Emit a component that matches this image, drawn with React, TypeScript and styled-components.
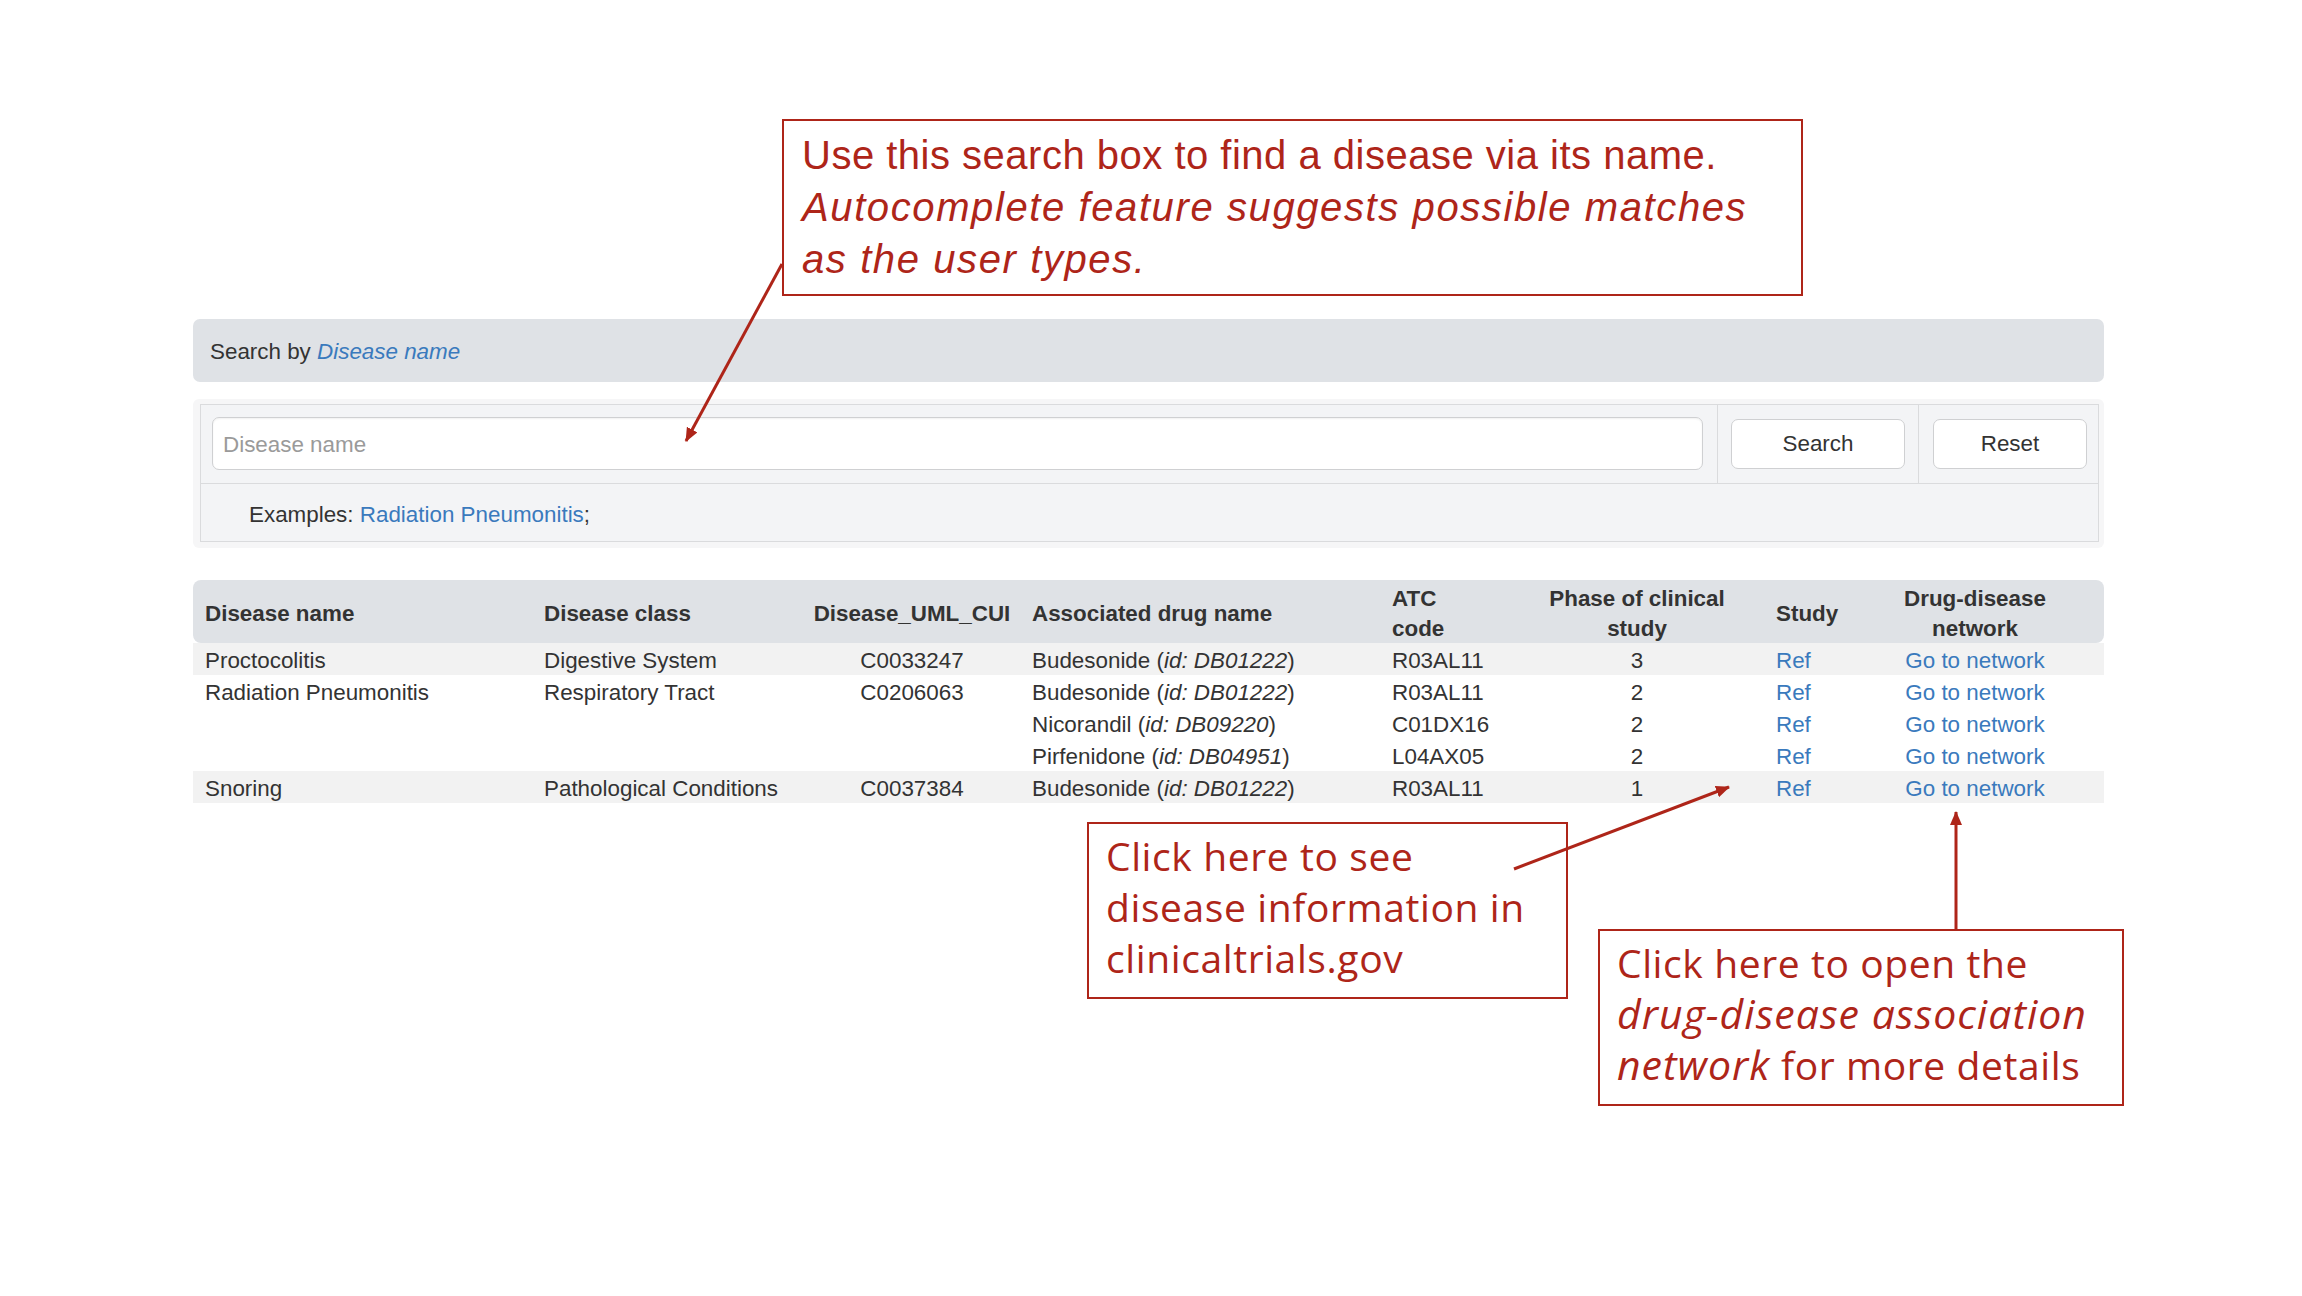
import React from "react";
import styled, { createGlobalStyle } from "styled-components";

const GlobalStyle = createGlobalStyle`
  html, body { margin: 0; padding: 0; background: #ffffff; }
  * { box-sizing: border-box; }
`;

const Page = styled.div`
  position: relative;
  width: 2302px;
  height: 1296px;
  background: #ffffff;
  font-family: "Liberation Sans", Arial, Helvetica, sans-serif;
  font-size: 22.4px;
  line-height: 32px;
  color: #333333;
  overflow: hidden;
`;

const Content = styled.main`
  display: flex;
  flex-direction: column;
  padding: 319px 198px 0 193px;
`;

const PanelHeading = styled.div`
  display: flex;
  align-items: center;
  height: 63px;
  padding: 2px 17px 0;
  background: #dfe2e6;
  border-radius: 7px;
`;

const Link = styled.a<{ $italic?: boolean }>`
  color: #3a7abd;
  text-decoration: none;
  font-style: ${(p) => (p.$italic ? "italic" : "normal")};
  cursor: pointer;
`;

const SearchWell = styled.section`
  margin-top: 17px;
  padding: 5px 5px 6px 7px;
  background: #f6f6f7;
  border-radius: 6px;
`;

const SearchGrid = styled.div`
  display: grid;
  grid-template-columns: 1fr 201px 180px;
  border: 1px solid #dadbdd;
  background: #f3f4f6;
`;

const InputCell = styled.div`
  padding: 12px 14px 13px 11px;
`;

const TextInput = styled.input`
  display: block;
  width: 100%;
  height: 53px;
  padding: 2px 10px 0;
  border: 1px solid #cfd0d2;
  border-radius: 7px;
  background: #ffffff;
  font-family: "Liberation Sans", Arial, sans-serif;
  font-size: 22.4px;
  color: #333;
  box-shadow: inset 0 1px 2px rgba(0, 0, 0, 0.06);
  outline: none;
  &::placeholder { color: #9a9a9a; }
`;

const ButtonCell = styled.div<{ $padL: number; $padR: number }>`
  display: flex;
  align-items: center;
  border-left: 1px solid #dadbdd;
  padding: 0 ${(p) => p.$padR}px 0 ${(p) => p.$padL}px;
`;

const Button = styled.button`
  width: 100%;
  height: 50px;
  padding: 0;
  border: 1px solid #cfd0d2;
  border-radius: 7px;
  background: #ffffff;
  font-family: "Liberation Sans", Arial, sans-serif;
  font-size: 22.4px;
  color: #333;
  cursor: pointer;
`;

const ExamplesRow = styled.div`
  grid-column: 1 / -1;
  display: flex;
  align-items: center;
  height: 58px;
  padding: 5px 0 0 48px;
  border-top: 1px solid #dadbdd;
`;

const ResultTable = styled.table`
  margin-top: 32px;
  width: 1911px;
  border-collapse: separate;
  border-spacing: 0;
  table-layout: fixed;
`;

const HeadCell = styled.th<{ $align?: string; $padR?: number }>`
  height: 63px;
  padding: 4px ${(p) => p.$padR ?? 8}px 0 12px;
  background: #dfe2e6;
  font-weight: bold;
  text-align: ${(p) => p.$align ?? "left"};
  vertical-align: middle;
  line-height: 29.5px;
  white-space: nowrap;
  &:first-child { border-radius: 8px 0 0 8px; }
  &:last-child { border-radius: 0 8px 8px 0; }
`;

const Row = styled.tr<{ $striped?: boolean }>`
  background: ${(p) => (p.$striped ? "#f2f2f2" : "#ffffff")};
`;

const Cell = styled.td<{ $align?: string; $padR?: number }>`
  height: 32px;
  padding: 4px ${(p) => p.$padR ?? 8}px 0 12px;
  line-height: 28px;
  text-align: ${(p) => p.$align ?? "left"};
  vertical-align: top;
  white-space: nowrap;
`;

const Callout = styled.div<{ $x: number; $y: number; $w: number; $h: number; $sans?: boolean }>`
  position: absolute;
  left: ${(p) => p.$x}px;
  top: ${(p) => p.$y}px;
  width: ${(p) => p.$w}px;
  height: ${(p) => p.$h}px;
  border: 2px solid #ae2519;
  background: transparent;
  color: #ae2519;
  white-space: nowrap;
  ${(p) =>
    p.$sans
      ? `font-family: "Liberation Sans", Arial, sans-serif; font-size: 40px; letter-spacing: 0.5px; line-height: 52px; padding: 8px 18px;`
      : `font-family: "Open Sans", "Noto Sans", sans-serif; font-size: 39px; letter-spacing: 0.6px; line-height: 51px; padding: 6px 17px;`}
`;

const SansItalic = styled.i`
  font-style: italic;
  letter-spacing: 1.6px;
`;

const OpenItalic = styled.i`
  font-style: italic;
  font-size: 41px;
  letter-spacing: 1px;
`;

const Arrows = styled.svg`
  position: absolute;
  left: 0;
  top: 0;
  width: 2302px;
  height: 1296px;
  pointer-events: none;
`;

type Drug = { name: string; id: string; atc: string; phase: number };
type Disease = { name: string; cls: string; cui: string; drugs: Drug[] };

const data: Disease[] = [
  { name: "Proctocolitis", cls: "Digestive System", cui: "C0033247", drugs: [{ name: "Budesonide", id: "DB01222", atc: "R03AL11", phase: 3 }] },
  {
    name: "Radiation Pneumonitis",
    cls: "Respiratory Tract",
    cui: "C0206063",
    drugs: [
      { name: "Budesonide", id: "DB01222", atc: "R03AL11", phase: 2 },
      { name: "Nicorandil", id: "DB09220", atc: "C01DX16", phase: 2 },
      { name: "Pirfenidone", id: "DB04951", atc: "L04AX05", phase: 2 },
    ],
  },
  { name: "Snoring", cls: "Pathological Conditions", cui: "C0037384", drugs: [{ name: "Budesonide", id: "DB01222", atc: "R03AL11", phase: 1 }] },
];

const colWidths = [339, 268, 220, 360, 126, 258, 128, 212];

export default function App() {
  return (
    <Page>
      <GlobalStyle />
      <Content>
        <PanelHeading>
          Search by&nbsp;<Link $italic>Disease name</Link>
        </PanelHeading>
        <SearchWell>
          <SearchGrid>
            <InputCell>
              <TextInput placeholder="Disease name" />
            </InputCell>
            <ButtonCell $padL={13} $padR={13}>
              <Button>Search</Button>
            </ButtonCell>
            <ButtonCell $padL={14} $padR={11}>
              <Button>Reset</Button>
            </ButtonCell>
            <ExamplesRow>
              Examples:&nbsp;<Link>Radiation Pneumonitis</Link>;
            </ExamplesRow>
          </SearchGrid>
        </SearchWell>
        <ResultTable>
          <colgroup>
            {colWidths.map((w, i) => (
              <col key={i} style={{ width: w }} />
            ))}
          </colgroup>
          <thead>
            <tr>
              <HeadCell>Disease name</HeadCell>
              <HeadCell>Disease class</HeadCell>
              <HeadCell $align="center">Disease_UML_CUI</HeadCell>
              <HeadCell>Associated drug name</HeadCell>
              <HeadCell>
                ATC
                <br />
                code
              </HeadCell>
              <HeadCell $align="center">
                Phase of clinical
                <br />
                study
              </HeadCell>
              <HeadCell>Study</HeadCell>
              <HeadCell $align="center" $padR={58}>
                Drug-disease
                <br />
                network
              </HeadCell>
            </tr>
          </thead>
          <tbody>
            {data.map((d, di) =>
              d.drugs.map((g, gi) => (
                <Row key={`${di}-${gi}`} $striped={di % 2 === 0}>
                  {gi === 0 && (
                    <>
                      <Cell rowSpan={d.drugs.length}>{d.name}</Cell>
                      <Cell rowSpan={d.drugs.length}>{d.cls}</Cell>
                      <Cell rowSpan={d.drugs.length} $align="center">
                        {d.cui}
                      </Cell>
                    </>
                  )}
                  <Cell>
                    {g.name} (<i>id: {g.id}</i>)
                  </Cell>
                  <Cell>{g.atc}</Cell>
                  <Cell $align="center">{g.phase}</Cell>
                  <Cell>
                    <Link>Ref</Link>
                  </Cell>
                  <Cell $align="center" $padR={58}>
                    <Link>Go to network</Link>
                  </Cell>
                </Row>
              ))
            )}
          </tbody>
        </ResultTable>
      </Content>

      <Callout $x={782} $y={119} $w={1021} $h={177} $sans>
        Use this search box to find a disease via its name.
        <br />
        <SansItalic>Autocomplete feature suggests possible matches</SansItalic>
        <br />
        <SansItalic>as the user types.</SansItalic>
      </Callout>
      <Callout $x={1087} $y={822} $w={481} $h={177}>
        Click here to see
        <br />
        disease information in
        <br />
        clinicaltrials.gov
      </Callout>
      <Callout $x={1598} $y={929} $w={526} $h={177}>
        Click here to open the
        <br />
        <OpenItalic>drug-disease association</OpenItalic>
        <br />
        <OpenItalic>network</OpenItalic> for more details
      </Callout>

      <Arrows viewBox="0 0 2302 1296">
        <defs>
          <marker id="head" viewBox="0 0 14 12" refX="13" refY="6" markerWidth="14" markerHeight="12" markerUnits="userSpaceOnUse" orient="auto">
            <path d="M0,0 L14,6 L0,12 z" fill="#ae2519" />
          </marker>
        </defs>
        <line x1="782" y1="264" x2="686" y2="441" stroke="#ae2519" strokeWidth="3" markerEnd="url(#head)" />
        <line x1="1514" y1="869" x2="1729" y2="787" stroke="#ae2519" strokeWidth="3" markerEnd="url(#head)" />
        <line x1="1956" y1="929" x2="1956" y2="812" stroke="#ae2519" strokeWidth="3" markerEnd="url(#head)" />
      </Arrows>
    </Page>
  );
}
